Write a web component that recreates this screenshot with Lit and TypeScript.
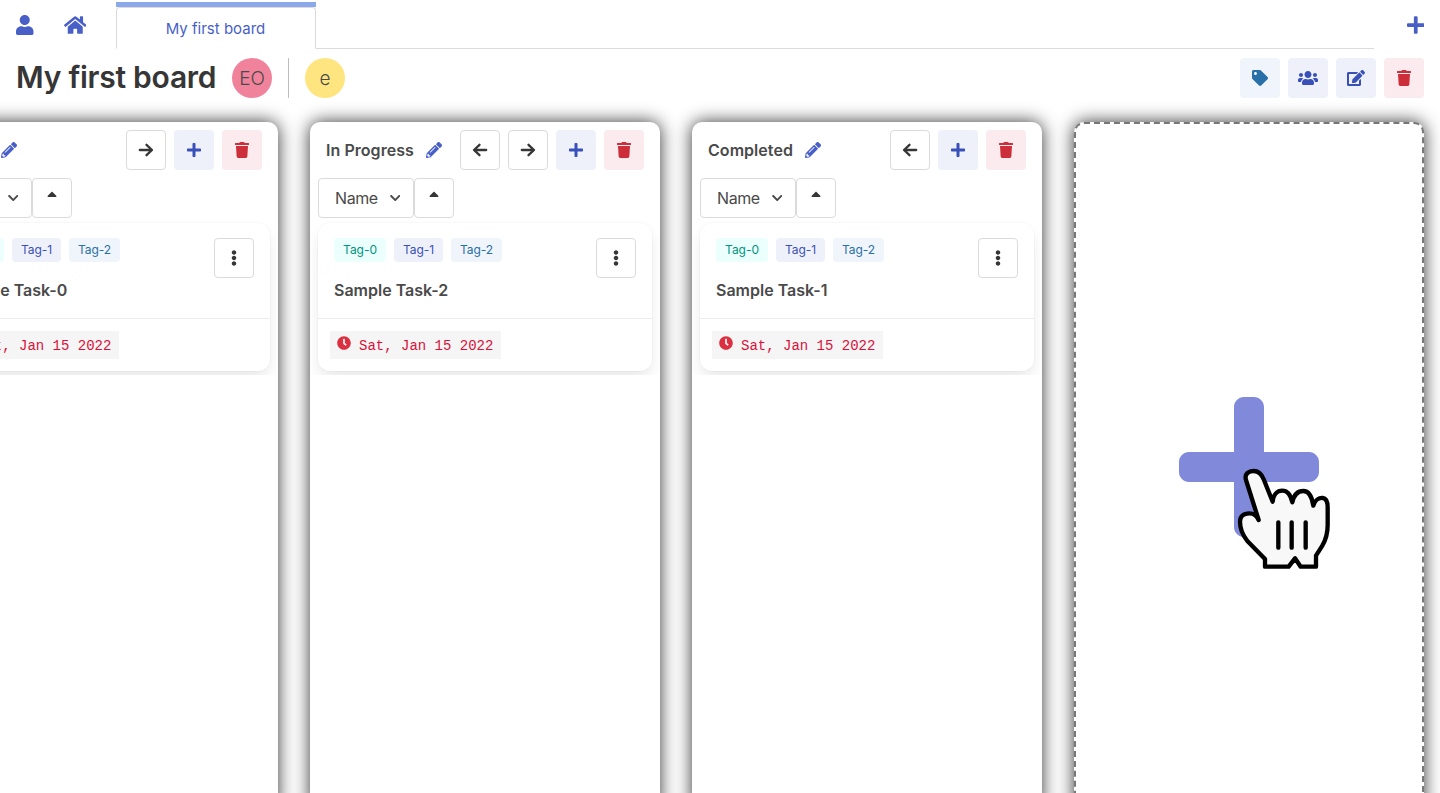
import { LitElement, html, css, svg } from "lit";
import { customElement } from "lit/decorators.js";

const I: Record<string, [number, string]> = {
  user: [448, "M224 256c70.7 0 128-57.3 128-128S294.7 0 224 0 96 57.3 96 128s57.3 128 128 128zm89.6 32h-16.7c-22.2 10.2-46.9 16-72.9 16s-50.6-5.8-72.9-16h-16.7C60.2 288 0 348.2 0 422.4V464c0 26.5 21.5 48 48 48h352c26.5 0 48-21.5 48-48v-41.6c0-74.2-60.2-134.4-134.4-134.4z"],
  home: [576, "M280.37 148.26L96 300.11V464a16 16 0 0 0 16 16l112.06-.29a16 16 0 0 0 15.92-16V368a16 16 0 0 1 16-16h64a16 16 0 0 1 16 16v95.64a16 16 0 0 0 16 16.05L464 480a16 16 0 0 0 16-16V300L295.67 148.26a12.19 12.19 0 0 0-15.3 0zM571.6 251.47L488 182.56V44.05a12 12 0 0 0-12-12h-56a12 12 0 0 0-12 12v72.61L318.47 43a48 48 0 0 0-61 0L4.34 251.47a12 12 0 0 0-1.6 16.9l25.5 31A12 12 0 0 0 45.15 301l235.22-193.74a12.19 12.19 0 0 1 15.3 0L530.9 301a12 12 0 0 0 16.9-1.6l25.5-31a12 12 0 0 0-1.7-16.93z"],
  plus: [448, "M416 208H272V64c0-17.67-14.33-32-32-32h-32c-17.67 0-32 14.33-32 32v144H32c-17.67 0-32 14.33-32 32v32c0 17.67 14.33 32 32 32h144v144c0 17.67 14.33 32 32 32h32c17.67 0 32-14.33 32-32V304h144c17.67 0 32-14.33 32-32v-32c0-17.67-14.33-32-32-32z"],
  trash: [448, "M432 32H312l-9.4-18.7A24 24 0 0 0 281.1 0H166.8a23.72 23.72 0 0 0-21.4 13.3L136 32H16A16 16 0 0 0 0 48v32a16 16 0 0 0 16 16h416a16 16 0 0 0 16-16V48a16 16 0 0 0-16-16zM53.2 467a48 48 0 0 0 47.9 45h245.8a48 48 0 0 0 47.9-45L416 128H32z"],
  tag: [512, "M0 252.118V48C0 21.49 21.49 0 48 0h204.118a48 48 0 0 1 33.941 14.059l211.882 211.882c18.745 18.745 18.745 49.137 0 67.882L293.823 497.941c-18.745 18.745-49.137 18.745-67.882 0L14.059 286.059A48 48 0 0 1 0 252.118zM112 64c-26.51 0-48 21.49-48 48s21.49 48 48 48 48-21.49 48-48-21.49-48-48-48z"],
  users: [640, "M96 224c35.3 0 64-28.7 64-64s-28.7-64-64-64-64 28.7-64 64 28.7 64 64 64zm448 0c35.3 0 64-28.7 64-64s-28.7-64-64-64-64 28.7-64 64 28.7 64 64 64zm32 32h-64c-17.6 0-33.5 7.1-45.1 18.6 40.3 22.1 68.9 62 75.1 109.4h66c17.7 0 32-14.3 32-32v-32c0-35.3-28.7-64-64-64zm-256 0c61.9 0 112-50.1 112-112S381.9 32 320 32 208 82.1 208 144s50.1 112 112 112zm76.8 32h-8.3c-20.8 10-43.9 16-68.5 16s-47.6-6-68.5-16h-8.3C179.6 288 128 339.6 128 403.2V432c0 26.5 21.5 48 48 48h288c26.5 0 48-21.5 48-48v-28.8c0-63.6-51.6-115.2-115.2-115.2zm-223.7-13.4C161.5 263.1 145.6 256 128 256H64c-35.3 0-64 28.7-64 64v32c0 17.7 14.3 32 32 32h65.9c6.3-47.4 34.9-87.3 75.2-109.4z"],
  edit: [576, "M402.6 83.2l90.2 90.2c3.8 3.8 3.8 10 0 13.8L274.4 405.6l-92.8 10.3c-12.4 1.4-22.9-9.1-21.5-21.5l10.3-92.8L388.8 83.2c3.8-3.8 10-3.8 13.8 0zm162-22.9l-48.8-48.8c-15.2-15.2-39.9-15.2-55.2 0l-35.4 35.4c-3.8 3.8-3.8 10 0 13.8l90.2 90.2c3.8 3.8 10 3.8 13.8 0l35.4-35.4c15.2-15.3 15.2-40 0-55.2zM384 346.2V448H64V128h229.8c3.2 0 6.2-1.3 8.5-3.5l40-40c7.6-7.6 2.2-20.5-8.5-20.5H48C21.5 64 0 85.5 0 112v352c0 26.5 21.5 48 48 48h352c26.5 0 48-21.5 48-48V306.2c0-10.7-12.9-16-20.5-8.5l-40 40c-2.2 2.3-3.5 5.3-3.5 8.5z"],
  pencil: [512, "M497.9 142.1l-46.1 46.1c-4.7 4.7-12.3 4.7-17 0l-111-111c-4.7-4.7-4.7-12.3 0-17l46.1-46.1c18.7-18.7 49.1-18.7 67.9 0l60.1 60.1c18.8 18.7 18.8 49.1 0 67.9zM284.2 99.8L21.6 362.4.4 483.9c-2.9 16.4 11.4 30.6 27.8 27.8l121.5-21.3 262.6-262.6c4.7-4.7 4.7-12.3 0-17l-111-111c-4.8-4.7-12.4-4.7-17.1 0zM124.1 339.9c-5.5-5.5-5.5-14.3 0-19.8l154-154c5.5-5.5 14.3-5.5 19.8 0s5.5 14.3 0 19.8l-154 154c-5.5 5.5-14.3 5.5-19.8 0zM88 424h48v36.3l-64.5 11.3-31.1-31.1L51.7 376H88v48z"],
  dots: [192, "M96 184c39.8 0 72 32.2 72 72s-32.2 72-72 72-72-32.2-72-72 32.2-72 72-72zM24 80c0 39.8 32.2 72 72 72s72-32.2 72-72S135.8 8 96 8 24 40.2 24 80zm0 352c0 39.8 32.2 72 72 72s72-32.2 72-72-32.2-72-72-72-72 32.2-72 72z"],
  clock: [512, "M256,8C119,8,8,119,8,256S119,504,256,504,504,393,504,256,393,8,256,8Zm92.49,313h0l-20,25a16,16,0,0,1-22.49,2.5h0l-67-49.72a40,40,0,0,1-15-31.23V112a16,16,0,0,1,16-16h32a16,16,0,0,1,16,16V256l58,42.5A16,16,0,0,1,348.49,321Z"],
  chevron: [448, "M207.029 381.476L12.686 187.132c-9.373-9.373-9.373-24.569 0-33.941l22.667-22.667c9.357-9.357 24.522-9.375 33.901-.04L224 284.505l154.745-154.021c9.379-9.335 24.544-9.317 33.901.04l22.667 22.667c9.373 9.373 9.373 24.569 0 33.941L240.971 381.476c-9.373 9.372-24.569 9.372-33.942 0z"],
  sortUp: [320, "M279 224H41c-21.4 0-32.1-25.9-17-41L143 64c9.4-9.4 24.6-9.4 33.9 0l119 119c15.2 15.1 4.5 41-16.9 41z"],
};

const ic = (n: string, cls = "") => html`<svg class="ic ${cls}" viewBox="0 0 ${I[n][0]} 512">${svg`<path d=${I[n][1]}></path>`}</svg>`;

const arrow = (dir: "left" | "right") => html`<svg class="arrow" viewBox="0 0 16 16">
  ${dir === "left"
    ? svg`<path d="M7.5 2.8 2 8l5.5 5.2M2.6 8h11.6"></path>`
    : svg`<path d="M8.5 2.8 14 8l-5.5 5.2M13.4 8H1.8"></path>`}
</svg>`;

@customElement("app-root")
export class AppRoot extends LitElement {
  static styles = css`
    :host {
      display: flex;
      flex-direction: column;
      height: 793px;
      overflow: hidden;
      background: #fff;
      color: #4a4a4a;
      font-family: Inter, "Liberation Sans", sans-serif;
      font-size: 16px;
    }
    * { box-sizing: border-box; }
    .ic { height: 16px; fill: currentColor; display: block; flex: none; }
    .ic.lg { height: 20px; }
    .ic.sm { height: 14px; }
    .ic.xs { height: 12px; }
    .arrow { width: 16px; height: 16px; fill: none; stroke: #363636; stroke-width: 2.3; stroke-linecap: round; stroke-linejoin: round; display: block; }

    .nav { display: flex; height: 49px; flex: none; color: #485fc7; }
    .nav-left { width: 116px; display: flex; align-items: flex-start; padding: 15px 0 0 16px; gap: 30px; flex: none; }
    .tabs { width: 1258px; flex: none; border-bottom: 1px solid #dbdbdb; padding-top: 2px; height: 49px; }
    .tab {
      width: 200px;
      height: 47px;
      border-top: 5px solid #8ba9ea;
      background: #fff;
    }
    .tab-in {
      height: 42px;
      border: 1px solid #dbdbdb;
      border-bottom: 1px solid #fff;
      border-radius: 4px 4px 0 0;
      display: flex;
      align-items: center;
      justify-content: center;
      font-size: 15px;
      line-height: 24px;
      color: #485fc7;
      padding: 1px 1px 0 0;
    }
    .tab-add { flex: 1; display: flex; justify-content: flex-end; padding: 15px 16px 0 0; }

    .head { display: flex; align-items: center; justify-content: space-between; flex: none; height: 40px; margin-top: 9px; padding: 0 16px; }
    .head-l { display: flex; align-items: center; }
    h1 { margin: 0; font-size: 30px; font-weight: 600; color: #363636; line-height: 38px; height: 40px; letter-spacing: -0.25px; width: 216px; white-space: nowrap; }
    .av { width: 40px; height: 40px; border-radius: 50%; display: flex; align-items: center; justify-content: center; font-size: 19px; font-weight: 300; color: #4a4a4a; }
    .pink { background: #f1829b; }
    .yellow { background: #ffe57f; }
    .sep { width: 1px; height: 40px; background: #bdbdbd; margin: 0 16px; }
    .tools { display: flex; gap: 8px; }

    .btn { width: 40px; height: 40px; border-radius: 4px; display: flex; align-items: center; justify-content: center; flex: none; }
    .outline { border: 1px solid #dbdbdb; color: #363636; background: #fff; }
    .link { background: #eff1fa; color: #3850b7; }
    .info { background: #eff5fb; color: #296fa8; }
    .danger { background: #fcebee; color: #cc2f3a; }

    .board { display: flex; gap: 32px; margin: 24px 0 0 -72px; flex: none; }
    .col { width: 350px; height: 690px; flex: none; background: #fff; border-radius: 10px; box-shadow: 0 0 18px rgba(0, 0, 0, 0.8); display: flex; flex-direction: column; position: relative; }
    .col-head { display: flex; align-items: center; justify-content: space-between; padding: 8px 16px 0; height: 48px; flex: none; }
    .name { display: flex; align-items: center; gap: 12px; font-weight: 600; color: #4a4a4a; white-space: nowrap; line-height: 24px; letter-spacing: 0.05px; }
    .name .ic { color: #485fc7; }
    .acts { display: flex; gap: 8px; }
    .sort { display: flex; padding: 8px 8px 0; flex: none; }
    .select { width: 96px; height: 40px; border: 1px solid #dbdbdb; border-radius: 4px; display: flex; align-items: center; justify-content: space-between; padding: 0 13px 0 16px; color: #4a4a4a; letter-spacing: -0.4px; }
    .sort-btn { align-items: center; }
    .cards { overflow: hidden; padding: 5px 8px 4px; flex: none; }
    .card { height: 148px; border-radius: 12px; background: #fff; box-shadow: 0 8px 16px -2px rgba(10, 10, 10, 0.1), 0 0 0 1px rgba(10, 10, 10, 0.02); display: flex; flex-direction: column; }
    .card-main { flex: 1; border-bottom: 1px solid #ededed; display: flex; justify-content: space-between; padding: 15px 16px 0; }
    .tags { display: flex; gap: 8px; }
    .tag { height: 24px; padding: 0 0 2px; width: 52px; justify-content: center; border-radius: 4px; font-size: 12px; display: flex; align-items: center; letter-spacing: -0.05px; }
    .t0 { background: #ebfffc; color: #00947e; }
    .t1 { background: #eff1fa; color: #3850b7; width: 49px; }
    .t2 { background: #eff5fb; color: #296fa8; width: 51px; }
    .task { font-weight: 600; color: #4a4a4a; line-height: 24px; margin-top: 16px; white-space: nowrap; }
    .card-foot { height: 52px; flex: none; padding: 12px 12px 0; }
    .date { display: inline-flex; align-items: center; gap: 8px; height: 28px; padding: 2px 7px 0; background: #f5f5f5; color: #da1039; font-family: "Liberation Mono", monospace; font-size: 14px; width: 171px; white-space: nowrap; }
    .date .ic { color: #dc2f3f; position: relative; top: -3px; }

    .add { border: 2px dashed #777; align-items: center; justify-content: center; color: #8189db; }
    .add .big { height: 160px; }
    .hand { position: absolute; left: 84px; top: 261px; width: 190px; height: 195px; }
    .hand path { fill: #f8f8f8; stroke: #000; stroke-width: 13; stroke-linejoin: round; stroke-linecap: round; }
  `;

  private column(name: string, task: string, left: boolean, right: boolean) {
    return html`<section class="col">
      <div class="col-head">
        <div class="name">${name}${ic("pencil")}</div>
        <div class="acts">
          ${left ? html`<div class="btn outline">${arrow("left")}</div>` : ""}
          ${right ? html`<div class="btn outline">${arrow("right")}</div>` : ""}
          <div class="btn link">${ic("plus")}</div>
          <div class="btn danger">${ic("trash")}</div>
        </div>
      </div>
      <div class="sort">
        <div class="select"><span>Name</span>${ic("chevron", "xs")}</div>
        <div class="btn outline sort-btn">${ic("sortUp")}</div>
      </div>
      <div class="cards">
        <article class="card">
          <div class="card-main">
            <div>
              <div class="tags">
                <span class="tag t0">Tag-0</span>
                <span class="tag t1">Tag-1</span>
                <span class="tag t2">Tag-2</span>
              </div>
              <div class="task">${task}</div>
            </div>
            <div class="btn outline">${ic("dots")}</div>
          </div>
          <div class="card-foot">
            <code class="date">${ic("clock", "sm")}Sat, Jan 15 2022</code>
          </div>
        </article>
      </div>
    </section>`;
  }

  render() {
    return html`
      <nav class="nav">
        <div class="nav-left">${ic("user", "lg")}${ic("home", "lg")}</div>
        <div class="tabs"><div class="tab"><div class="tab-in">My first board</div></div></div>
        <div class="tab-add">${ic("plus", "lg")}</div>
      </nav>
      <header class="head">
        <div class="head-l">
          <h1>My first board</h1>
          <div class="av pink">EO</div>
          <div class="sep"></div>
          <div class="av yellow">e</div>
        </div>
        <div class="tools">
          <div class="btn info">${ic("tag")}</div>
          <div class="btn link">${ic("users")}</div>
          <div class="btn link">${ic("edit")}</div>
          <div class="btn danger">${ic("trash")}</div>
        </div>
      </header>
      <main class="board">
        ${this.column("To Do", "Sample Task-0", false, true)}
        ${this.column("In Progress", "Sample Task-2", true, true)}
        ${this.column("Completed", "Sample Task-1", true, false)}
        <section class="col add">
          ${ic("plus", "big")}
          <svg class="hand" viewBox="0 0 570 585">
            <path d="M258 285C252 265 268 258 281 258C296 258 306 270 311 283L338 350C340 328 352 317 367 317C382 317 392 330 397 352C402 328 415 318 430 318C447 318 456 335 460 362C465 344 478 338 488 339C500 340 503 352 503 368V420C503 445 497 465 487 482L468 512V545H422L405 520L386 545H315V522L262 468C248 450 240 430 240 410C240 395 250 385 268 385C280 385 290 392 296 405Z"></path>
            <path d="M355 412V488M395 412V488M437 412V488"></path>
          </svg>
        </section>
      </main>
    `;
  }
}
